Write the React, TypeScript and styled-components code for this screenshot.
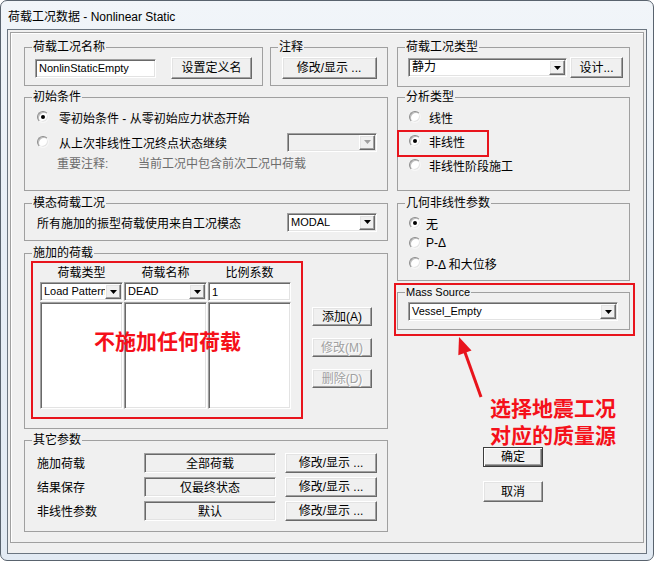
import React from 'react';
import styled, { createGlobalStyle, css } from 'styled-components';

const FONT = `"Liberation Sans", "Noto Sans CJK SC", sans-serif`;
const RED_BOX = '#e8141c';
const RED_TEXT = '#f5101a';

const GlobalStyle = createGlobalStyle`
  html, body { margin: 0; padding: 0; background: #ffffff; }
  body { font-family: ${FONT}; font-size: 12px; color: #000; }
  *, *::before, *::after { box-sizing: border-box; }
`;

const sunken = css`
  border: 1px solid;
  border-color: #a0a0a0 #ffffff #ffffff #a0a0a0;
  box-shadow: inset 1px 1px 0 #696969, inset -1px -1px 0 #e3e3e3;
`;

const raised = css`
  border: 1px solid;
  border-color: #ffffff #696969 #696969 #ffffff;
  box-shadow: inset -1px -1px 0 #a0a0a0, inset 1px 1px 0 #e3e3e3;
`;

const Window = styled.div`
  position: relative;
  width: 654px;
  height: 561px;
  border: 1px solid #59636e;
  border-radius: 7px;
  background: linear-gradient(180deg, #f1f5f9 0%, #e7eef6 45%, #e2eaf3 100%);
  padding: 0 6px 6px 6px;
  display: flex;
  flex-direction: column;
  overflow: hidden;
`;

const TitleBar = styled.div`
  height: 28px;
  display: flex;
  align-items: center;
  padding-left: 1px;
  font-size: 12px;
  color: #000;
`;

const Client = styled.div`
  flex: 1;
  border: 1px solid #6b7580;
  background: #f0f0f0;
  padding: 2px 2px 10px 2px;
  display: flex;
`;

const Frame = styled.div`
  flex: 1;
  border: 1px solid #a0a0a0;
  box-shadow: inset 1px 1px 0 #ffffff;
  padding: 7px 12px 0 13px;
  display: grid;
  grid-template-columns: 364px 233px;
  column-gap: 9px;
  align-items: start;
`;

const Column = styled.div`
  display: flex;
  flex-direction: column;
`;

const TopRow = styled.div`
  display: flex;
  gap: 7px;
`;

const Group = styled.fieldset<{ $w?: number; $h: number; $mt?: number }>`
  margin: ${p => p.$mt ?? 0}px 0 0 0;
  padding: 0;
  min-width: 0;
  width: ${p => (p.$w ? `${p.$w}px` : 'auto')};
  height: ${p => p.$h}px;
  border: 1px solid #a0a0a0;
`;

const Caption = styled.legend<{ $latin?: boolean }>`
  margin-left: 7px;
  padding: 0 1px;
  font-size: ${p => (p.$latin ? 11 : 12)}px;
  line-height: 14px;
  height: 14px;
`;

const GroupBody = styled.div<{ $pt?: number; $pl?: number; $pr?: number; $gap?: number }>`
  display: flex;
  flex-direction: column;
  padding: ${p => p.$pt ?? 0}px ${p => p.$pr ?? 0}px 0 ${p => p.$pl ?? 0}px;
  gap: ${p => p.$gap ?? 0}px;
`;

const Line = styled.div<{ $h: number; $between?: boolean; $gap?: number }>`
  display: flex;
  align-items: center;
  height: ${p => p.$h}px;
  gap: ${p => p.$gap ?? 0}px;
  justify-content: ${p => (p.$between ? 'space-between' : 'flex-start')};
`;

const Centered = styled.div`
  display: flex;
  justify-content: center;
`;

const Button = styled.div<{ $w: number; $h?: number; $ml?: number; $disabled?: boolean; $default?: boolean }>`
  ${raised};
  width: ${p => p.$w}px;
  height: ${p => p.$h ?? 20}px;
  margin-left: ${p => p.$ml ?? 0}px;
  background: #f0f0f0;
  display: flex;
  align-items: center;
  justify-content: center;
  flex: none;
  font-size: 12px;
  line-height: 14px;
  color: ${p => (p.$disabled ? '#a0a0a0' : '#000')};
  text-shadow: ${p => (p.$disabled ? '1px 1px 0 #ffffff' : 'none')};
  ${p =>
    p.$default &&
    css`
      border: 1px solid #3c3c3c;
      box-shadow: inset 1px 1px 0 #ffffff, inset -1px -1px 0 #696969, inset -2px -2px 0 #a0a0a0;
    `}
`;

const TextField = styled.div<{ $w: number; $h?: number }>`
  ${sunken};
  width: ${p => p.$w}px;
  height: ${p => p.$h ?? 19}px;
  background: #ffffff;
  padding: 0 3px;
  display: flex;
  align-items: center;
  font-size: 11px;
  white-space: nowrap;
  overflow: hidden;
  flex: none;
`;

const ComboBox = styled.div<{ $w: number; $disabled?: boolean }>`
  ${sunken};
  width: ${p => p.$w}px;
  height: 19px;
  background: ${p => (p.$disabled ? '#f0f0f0' : '#ffffff')};
  padding: 1px;
  display: flex;
  align-items: stretch;
  flex: none;
`;

const ComboText = styled.span<{ $latin?: boolean }>`
  flex: 1;
  min-width: 0;
  overflow: hidden;
  white-space: nowrap;
  padding-left: 2px;
  font-size: ${p => (p.$latin ? 11 : 12)}px;
  line-height: 15px;
  display: flex;
  align-items: center;
`;

const DropButton = styled.span`
  ${raised};
  width: 16px;
  flex: none;
  background: #f0f0f0;
  display: flex;
  align-items: center;
  justify-content: center;
`;

const Arrow = ({ disabled }: { disabled?: boolean }) => (
  <svg width="7" height="4" viewBox="0 0 7 4">
    <polygon points="0,0 7,0 3.5,4" fill={disabled ? '#a0a0a0' : '#000'} />
  </svg>
);

const Combo = ({ w, text, disabled, latin }: { w: number; text?: string; disabled?: boolean; latin?: boolean }) => (
  <ComboBox $w={w} $disabled={disabled}>
    <ComboText $latin={latin}>{text}</ComboText>
    <DropButton>
      <Arrow disabled={disabled} />
    </DropButton>
  </ComboBox>
);

const RadioRow = styled.div<{ $h: number; $gap: number }>`
  display: flex;
  align-items: center;
  height: ${p => p.$h}px;
  gap: ${p => p.$gap}px;
  white-space: nowrap;
`;

const RadioMark = styled.span<{ $checked?: boolean }>`
  width: 12px;
  height: 12px;
  border-radius: 50%;
  border: 1px solid;
  border-color: #8c8c8c #f6f6f6 #f6f6f6 #8c8c8c;
  box-shadow: inset 1px 1px 0 #bcbcbc, inset -1px -1px 0 #e4e4e4;
  background: #ffffff;
  display: flex;
  align-items: center;
  justify-content: center;
  flex: none;
  &::after {
    content: '';
    width: 4px;
    height: 4px;
    border-radius: 50%;
    background: #000;
    display: ${p => (p.$checked ? 'block' : 'none')};
  }
`;

const NoteLine = styled.div`
  display: flex;
  align-items: center;
  height: 16px;
  padding-left: 20px;
  color: #6d6d6d;
  white-space: nowrap;
`;

const NoteKey = styled.span`
  width: 81px;
`;

const LoadsBody = styled.div`
  display: flex;
  padding: 4px 0 0 15px;
`;

const LoadsTable = styled.div`
  display: grid;
  grid-template-columns: 83px 83px 83px;
  grid-template-rows: 18px 19px 108px;
  column-gap: 1px;
`;

const HeaderCell = styled.div`
  text-align: center;
  line-height: 18px;
  font-size: 12px;
`;

const ListBox = styled.div`
  ${sunken};
  background: #ffffff;
  margin-top: 1px;
  height: 107px;
`;

const SideButtons = styled.div`
  display: flex;
  flex-direction: column;
  gap: 12px;
  margin-left: 21px;
  padding-top: 43px;
`;

const ParamGrid = styled.div`
  display: grid;
  grid-template-columns: 107px 132px 101px;
  grid-auto-rows: 20px;
  row-gap: 4px;
  align-items: center;
  padding: 6px 0 0 12px;
`;

const ParamLabel = styled.div`
  font-size: 12px;
  line-height: 14px;
  padding-top: 2px;
`;

const StaticField = styled.div`
  ${sunken};
  height: 20px;
  background: #f0f0f0;
  display: flex;
  align-items: center;
  justify-content: center;
  padding-bottom: 2px;
  font-size: 12px;
`;

const ParamButton = styled(Button)`
  justify-self: end;
`;

const DialogButtons = styled.div`
  display: flex;
  flex-direction: column;
  gap: 14px;
  margin-top: 117px;
  padding-left: 86px;
`;

/* overlays: red annotation marks lying over the dialog */
const RedBox = styled.div<{ $x: number; $y: number; $w: number; $h: number }>`
  position: absolute;
  left: ${p => p.$x - 1}px;
  top: ${p => p.$y - 1}px;
  width: ${p => p.$w}px;
  height: ${p => p.$h}px;
  border: 2px solid ${RED_BOX};
  pointer-events: none;
`;

const RedText = styled.div<{ $x: number; $y: number }>`
  position: absolute;
  left: ${p => p.$x - 1}px;
  top: ${p => p.$y - 1}px;
  color: ${RED_TEXT};
  font-family: "Noto Sans CJK SC", sans-serif;
  font-weight: 700;
  font-size: 21px;
  line-height: 27px;
  letter-spacing: 0;
  white-space: nowrap;
  pointer-events: none;
`;

const ArrowMark = styled.svg`
  position: absolute;
  left: 448px;
  top: 329px;
  pointer-events: none;
`;

export default function App() {
  return (
    <>
      <GlobalStyle />
      <Window>
        <TitleBar>荷载工况数据 - Nonlinear Static</TitleBar>
        <Client>
          <Frame>
            <Column>
              <TopRow>
                <Group $w={239} $h={46}>
                  <Caption>荷载工况名称</Caption>
                  <GroupBody $pt={3} $pl={10}>
                    <Line $h={22}>
                      <TextField $w={121}>NonlinStaticEmpty</TextField>
                      <Button $w={81} $h={22} $ml={15}>设置定义名</Button>
                    </Line>
                  </GroupBody>
                </Group>
                <Group $w={118} $h={46}>
                  <Caption>注释</Caption>
                  <GroupBody $pt={3}>
                    <Centered>
                      <Button $w={95} $h={22}>修改/显示 ...</Button>
                    </Centered>
                  </GroupBody>
                </Group>
              </TopRow>

              <Group $h={101} $mt={4}>
                <Caption>初始条件</Caption>
                <GroupBody $pt={4} $pl={12} $pr={10}>
                  <RadioRow $h={18} $gap={10}>
                    <RadioMark $checked />
                    零初始条件 - 从零初始应力状态开始
                  </RadioRow>
                  <Line $h={20} $between style={{ marginTop: 6 }}>
                    <RadioRow $h={20} $gap={10}>
                      <RadioMark />
                      从上次非线性工况终点状态继续
                    </RadioRow>
                    <Combo w={90} disabled />
                  </Line>
                  <NoteLine style={{ marginTop: 2 }}>
                    <NoteKey>重要注释:</NoteKey>
                    当前工况中包含前次工况中荷载
                  </NoteLine>
                </GroupBody>
              </Group>

              <Group $h={45} $mt={5}>
                <Caption>模态荷载工况</Caption>
                <GroupBody $pt={2} $pl={12} $pr={10}>
                  <Line $h={20} $between>
                    <span>所有施加的振型荷载使用来自工况模态</span>
                    <Combo w={90} text="MODAL" latin />
                  </Line>
                </GroupBody>
              </Group>

              <Group $h={183} $mt={5}>
                <Caption>施加的荷载</Caption>
                <LoadsBody>
                  <LoadsTable>
                    <HeaderCell>荷载类型</HeaderCell>
                    <HeaderCell>荷载名称</HeaderCell>
                    <HeaderCell>比例系数</HeaderCell>
                    <Combo w={83} text="Load Pattern" latin />
                    <Combo w={83} text="DEAD" latin />
                    <TextField $w={83}>1</TextField>
                    <ListBox />
                    <ListBox />
                    <ListBox />
                  </LoadsTable>
                  <SideButtons>
                    <Button $w={60} $h={19}>添加(A)</Button>
                    <Button $w={60} $h={19} $disabled>修改(M)</Button>
                    <Button $w={60} $h={19} $disabled>删除(D)</Button>
                  </SideButtons>
                </LoadsBody>
              </Group>

              <Group $h={99} $mt={4}>
                <Caption>其它参数</Caption>
                <ParamGrid>
                  <ParamLabel>施加荷载</ParamLabel>
                  <StaticField>全部荷载</StaticField>
                  <ParamButton $w={92} $h={20}>修改/显示 ...</ParamButton>
                  <ParamLabel>结果保存</ParamLabel>
                  <StaticField>仅最终状态</StaticField>
                  <ParamButton $w={92} $h={20}>修改/显示 ...</ParamButton>
                  <ParamLabel>非线性参数</ParamLabel>
                  <StaticField>默认</StaticField>
                  <ParamButton $w={92} $h={20}>修改/显示 ...</ParamButton>
                </ParamGrid>
              </Group>
            </Column>

            <Column>
              <Group $h={47}>
                <Caption>荷载工况类型</Caption>
                <GroupBody $pt={3} $pl={10}>
                  <Line $h={21} $gap={3}>
                    <Combo w={159} text="静力" />
                    <Button $w={53} $h={21}>设计...</Button>
                  </Line>
                </GroupBody>
              </Group>

              <Group $h={101} $mt={3}>
                <Caption>分析类型</Caption>
                <GroupBody $pt={4} $pl={11} $gap={6}>
                  <RadioRow $h={18} $gap={8}>
                    <RadioMark />
                    线性
                  </RadioRow>
                  <RadioRow $h={18} $gap={8}>
                    <RadioMark $checked />
                    非线性
                  </RadioRow>
                  <RadioRow $h={18} $gap={8}>
                    <RadioMark />
                    非线性阶段施工
                  </RadioRow>
                </GroupBody>
              </Group>

              <Group $h={85} $mt={5}>
                <Caption>几何非线性参数</Caption>
                <GroupBody $pt={3} $pl={11}>
                  <RadioRow $h={20} $gap={5}>
                    <RadioMark $checked />
                    无
                  </RadioRow>
                  <RadioRow $h={20} $gap={5}>
                    <RadioMark />
                    P-Δ
                  </RadioRow>
                  <RadioRow $h={20} $gap={5}>
                    <RadioMark />
                    P-Δ 和大位移
                  </RadioRow>
                </GroupBody>
              </Group>

              <Group $h={45} $mt={4}>
                <Caption $latin>Mass Source</Caption>
                <GroupBody $pt={3} $pl={10}>
                  <Combo w={210} text="Vessel_Empty" latin />
                </GroupBody>
              </Group>

              <DialogButtons>
                <Button $w={60} $h={20} $default>确定</Button>
                <Button $w={60} $h={21}>取消</Button>
              </DialogButtons>
            </Column>
          </Frame>
        </Client>

        <RedBox $x={397} $y={130} $w={92} $h={27} />
        <RedBox $x={394} $y={283} $w={241} $h={53} />
        <RedBox $x={31} $y={261} $w={272} $h={158} />
        <RedText $x={94} $y={327}>不施加任何荷载</RedText>
        <RedText $x={490} $y={394}>
          选择地震工况
          <br />
          对应的质量源
        </RedText>
        <ArrowMark width="40" height="75" viewBox="0 0 40 75">
          <line x1="15.5" y1="21" x2="32" y2="67" stroke={RED_BOX} strokeWidth="3" />
          <polygon points="10,7 22.5,20.5 9.3,25.3" fill={RED_BOX} />
        </ArrowMark>
      </Window>
    </>
  );
}
